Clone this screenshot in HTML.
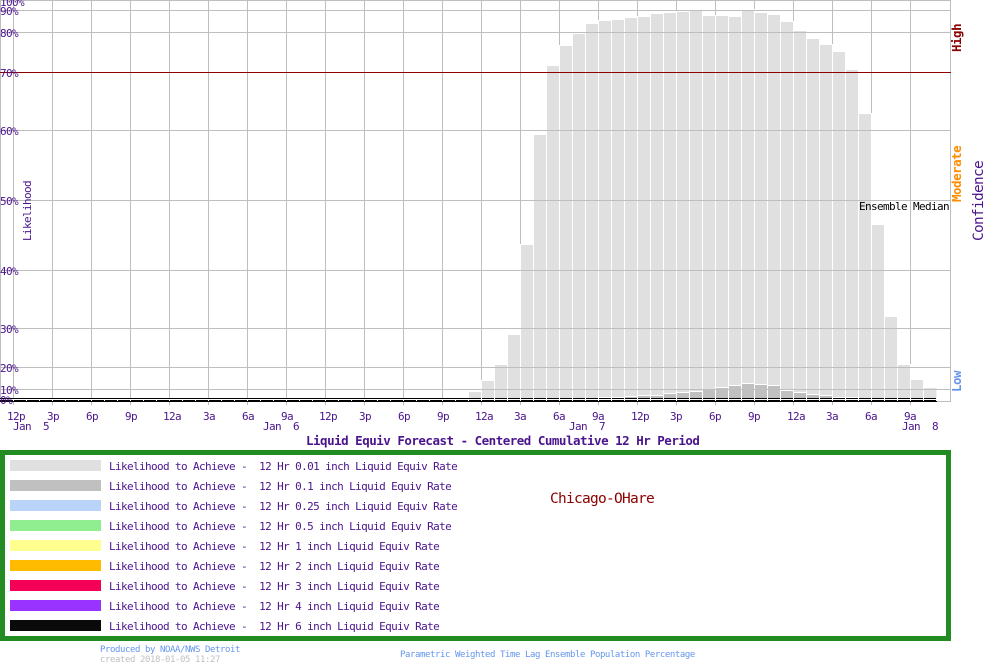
<!DOCTYPE html>
<html>
<head>
<meta charset="utf-8">
<title>Liquid Equiv Forecast</title>
<style>
html,body{margin:0;padding:0;background:#fff;width:1000px;height:670px;overflow:hidden}
svg{display:block}
text{font-family:"DejaVu Sans Mono","Liberation Mono",monospace;font-size:11px;letter-spacing:-.62px;fill:#4a148c;white-space:pre}
.b{font-weight:bold;font-size:12.5px;letter-spacing:-.5px}
.s{font-size:9px;letter-spacing:-.42px;fill:#6495ed}
.l{font-size:14.5px;letter-spacing:-.73px}
</style>
</head>
<body>
<svg width="1000" height="670" viewBox="0 0 1000 670" xmlns="http://www.w3.org/2000/svg">
<!-- vertical grid -->
<path fill="none" stroke="#bebebe" d="M.5 0V401M13.5 0V405M52.5 0V405M91.5 0V405M130.5 0V405M169.5 0V405M208.5 0V405M247.5 0V405M286.5 0V405M325.5 0V405M364.5 0V405M403.5 0V405M442.5 0V405M481.5 0V405M520.5 0V405M559.5 0V405M598.5 0V405M637.5 0V405M676.5 0V405M715.5 0V405M754.5 0V405M793.5 0V405M832.5 0V405M871.5 0V405M910.5 0V405M950.5 0V402"/>
<!-- base lines -->
<path fill="none" stroke="#bebebe" d="M937 401.5H950"/>
<!-- light bars -->
<path fill="#e0e0e0" stroke="#fff" d="M468.5 391.5H481.5V399H468.5zM481.5 380.5H494.5V399H481.5zM494.5 364.5H507.5V399H494.5zM507.5 334.5H520.5V399H507.5zM520.5 244.5H533.5V399H520.5zM533.5 134.5H546.5V399H533.5zM546.5 65.5H559.5V399H546.5zM559.5 45.5H572.5V399H559.5zM572.5 33.5H585.5V399H572.5zM585.5 23.5H598.5V399H585.5zM598.5 20.5H611.5V399H598.5zM611.5 19.5H624.5V399H611.5zM624.5 17.5H637.5V399H624.5zM637.5 16.5H650.5V399H637.5zM650.5 13.5H663.5V399H650.5zM663.5 12.5H676.5V399H663.5zM676.5 11.5H689.5V399H676.5zM689.5 9.5H702.5V399H689.5zM702.5 15.5H715.5V399H702.5zM715.5 15.5H728.5V399H715.5zM728.5 16.5H741.5V399H728.5zM741.5 9.5H754.5V399H741.5zM754.5 12.5H767.5V399H754.5zM767.5 14.5H780.5V399H767.5zM780.5 21.5H793.5V399H780.5zM793.5 30.5H806.5V399H793.5zM806.5 38.5H819.5V399H806.5zM819.5 44.5H832.5V399H819.5zM832.5 51.5H845.5V399H832.5zM845.5 69.5H858.5V399H845.5zM858.5 113.5H871.5V399H858.5zM871.5 224.5H884.5V399H871.5zM884.5 316.5H897.5V399H884.5zM897.5 364.5H910.5V399H897.5zM910.5 379.5H923.5V399H910.5zM923.5 387.5H937V399H923.5z"/>
<!-- darker bars -->
<path fill="#c0c0c0" stroke="#fff" d="M598.5 397.5H611.5V399H598.5zM611.5 397.5H624.5V399H611.5zM624.5 396.5H637.5V399H624.5zM637.5 395.5H650.5V399H637.5zM650.5 395.5H663.5V399H650.5zM663.5 393.5H676.5V399H663.5zM676.5 392.5H689.5V399H676.5zM689.5 391.5H702.5V399H689.5zM702.5 389.5H715.5V399H702.5zM715.5 387.5H728.5V399H715.5zM728.5 385.5H741.5V399H728.5zM741.5 383.5H754.5V399H741.5zM754.5 384.5H767.5V399H754.5zM767.5 385.5H780.5V399H767.5zM780.5 390.5H793.5V399H780.5zM793.5 392.5H806.5V399H793.5zM806.5 394.5H819.5V399H806.5zM819.5 395.5H832.5V399H819.5zM832.5 397.5H845.5V399H832.5zM845.5 397.5H858.5V399H845.5z"/>
<!-- horizontal grid -->
<path fill="none" stroke="#bebebe" d="M0 .5H951M0 10.5H951M0 32.5H951M0 130.5H951M0 200.5H951M0 270.5H951M0 328.5H951M0 367.5H951M0 389.5H951"/>
<path fill="none" stroke="#8b0000" d="M0 72.5H951"/>
<!-- black base -->
<rect x="0" y="399" width="937" height="1" fill="#fff"/>
<path fill="none" stroke="#000" d="M0 398.5H469"/>
<path fill="none" stroke="#000" stroke-dasharray="12 1" d="M469 398.5H937"/>
<rect x="0" y="400" width="937" height="2" fill="#000"/>
<path fill="none" stroke="#fff" stroke-dasharray="1 12" d="M13 400.5H937"/>

<!-- y labels -->
<text x="0" y="6">100%</text>
<text x="0" y="15">90%</text>
<text x="0" y="37">80%</text>
<text x="0" y="77">70%</text>
<text x="0" y="135">60%</text>
<text x="0" y="205">50%</text>
<text x="0" y="275">40%</text>
<text x="0" y="333">30%</text>
<text x="0" y="372">20%</text>
<text x="0" y="394">10%</text>
<text x="0" y="404">0%</text>

<!-- x labels -->
<text x="7" y="420">12p</text><text x="47" y="420">3p</text><text x="86" y="420">6p</text><text x="125" y="420">9p</text>
<text x="163" y="420">12a</text><text x="203" y="420">3a</text><text x="242" y="420">6a</text><text x="281" y="420">9a</text>
<text x="319" y="420">12p</text><text x="359" y="420">3p</text><text x="398" y="420">6p</text><text x="437" y="420">9p</text>
<text x="475" y="420">12a</text><text x="514" y="420">3a</text><text x="553" y="420">6a</text><text x="592" y="420">9a</text>
<text x="631" y="420">12p</text><text x="670" y="420">3p</text><text x="709" y="420">6p</text><text x="748" y="420">9p</text>
<text x="787" y="420">12a</text><text x="826" y="420">3a</text><text x="865" y="420">6a</text><text x="904" y="420">9a</text>
<text x="13" y="430">Jan  5</text>
<text x="263" y="430">Jan  6</text>
<text x="569" y="430">Jan  7</text>
<text x="902" y="430">Jan  8</text>

<text class="b" x="306" y="445">Liquid Equiv Forecast - Centered Cumulative 12 Hr Period</text>
<text x="859" y="210" style="fill:#000">Ensemble Median</text>

<!-- rotated labels -->
<text transform="translate(31 241) rotate(-90)">Likelihood</text>
<text class="b" transform="translate(961 52) rotate(-90)" style="fill:#8b0000">High</text>
<text class="b" transform="translate(961 202) rotate(-90)" style="fill:#ff8c00">Moderate</text>
<text class="b" transform="translate(961 392) rotate(-90)" style="fill:#6495ed">Low</text>
<text class="l" transform="translate(983 241) rotate(-90)">Confidence</text>

<!-- legend -->
<rect x="2.5" y="452.5" width="946" height="186" fill="#fff" stroke="#228b22" stroke-width="5"/>
<rect x="10" y="460" width="91" height="11" fill="#e0e0e0"/>
<rect x="10" y="480" width="91" height="11" fill="#c0c0c0"/>
<rect x="10" y="500" width="91" height="11" fill="#b9d3f9"/>
<rect x="10" y="520" width="91" height="11" fill="#90ee90"/>
<rect x="10" y="540" width="91" height="11" fill="#ffff8f"/>
<rect x="10" y="560" width="91" height="11" fill="#ffbb00"/>
<rect x="10" y="580" width="91" height="11" fill="#f50057"/>
<rect x="10" y="600" width="91" height="11" fill="#9933ff"/>
<rect x="10" y="620" width="91" height="11" fill="#0a0a0a"/>
<text x="109" y="470">Likelihood to Achieve -  12 Hr 0.01 inch Liquid Equiv Rate</text>
<text x="109" y="490">Likelihood to Achieve -  12 Hr 0.1 inch Liquid Equiv Rate</text>
<text x="109" y="510">Likelihood to Achieve -  12 Hr 0.25 inch Liquid Equiv Rate</text>
<text x="109" y="530">Likelihood to Achieve -  12 Hr 0.5 inch Liquid Equiv Rate</text>
<text x="109" y="550">Likelihood to Achieve -  12 Hr 1 inch Liquid Equiv Rate</text>
<text x="109" y="570">Likelihood to Achieve -  12 Hr 2 inch Liquid Equiv Rate</text>
<text x="109" y="590">Likelihood to Achieve -  12 Hr 3 inch Liquid Equiv Rate</text>
<text x="109" y="610">Likelihood to Achieve -  12 Hr 4 inch Liquid Equiv Rate</text>
<text x="109" y="630">Likelihood to Achieve -  12 Hr 6 inch Liquid Equiv Rate</text>
<text class="l" x="550" y="503" style="fill:#8b0000">Chicago-OHare</text>

<!-- footer -->
<text class="s" x="100" y="652">Produced by NOAA/NWS Detroit</text>
<text class="s" x="100" y="662" style="fill:#c0c0c0">created 2018-01-05 11:27</text>
<text class="s" x="400" y="657">Parametric Weighted Time Lag Ensemble Population Percentage</text>
</svg>
</body>
</html>
